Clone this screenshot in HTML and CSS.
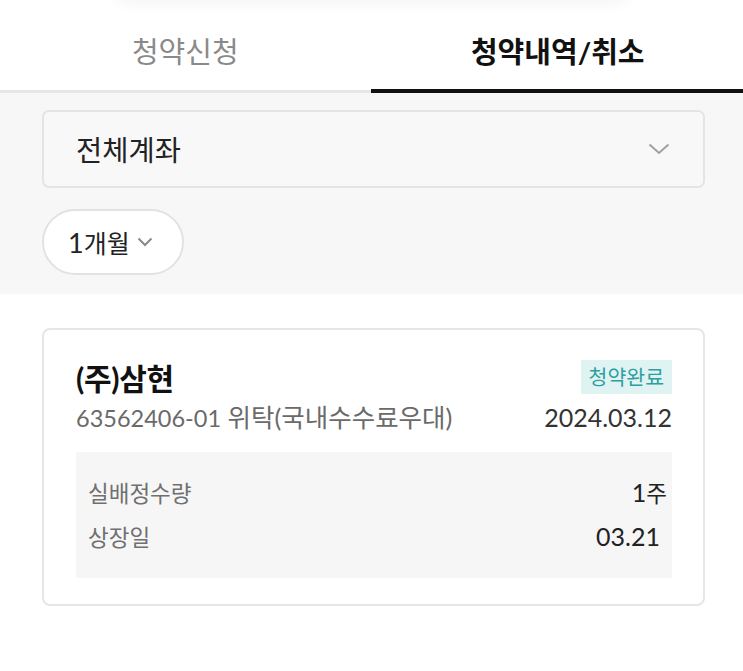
FILE: index.html
```html
<!DOCTYPE html>
<html lang="ko">
<head>
<meta charset="utf-8">
<link rel="stylesheet" href="styles.css">
</head>
<body>
<div class="top-shadow"></div>
<nav class="tabs">
  <div class="tab">청약신청</div>
  <div class="tab active">청약내역/취소</div>
</nav>
<section class="filters">
  <div class="select">
    <span>전체계좌</span>
    <svg class="chev" width="22" height="12" viewBox="0 0 22 12"><path d="M1.5 1.5 L11 10 L20.5 1.5" fill="none" stroke="#a0a0a0" stroke-width="2"/></svg>
  </div>
  <div class="pill">
    <span><span class="num">1</span>개월</span>
    <svg class="chev-sm" width="16" height="10" viewBox="0 0 16 10"><path d="M1.5 1.5 L8 8 L14.5 1.5" fill="none" stroke="#8a8a8a" stroke-width="2"/></svg>
  </div>
</section>
<section class="list">
  <article class="card">
    <div class="row head">
      <h2 class="name">(주)삼현</h2>
      <span class="badge">청약완료</span>
    </div>
    <div class="row sub">
      <span class="acct"><span class="num">63562406-01</span> 위탁(국내수수료우대)</span>
      <span class="date num">2024.03.12</span>
    </div>
    <div class="detail">
      <div class="drow"><span class="lbl">실배정수량</span><span class="val v1"><span class="num">1</span>주</span></div>
      <div class="drow"><span class="lbl">상장일</span><span class="val v2 num">03.21</span></div>
    </div>
  </article>
</section>
</body>
</html>
```
FILE: styles.css
```css
* { box-sizing: border-box; margin: 0; padding: 0; }
html, body { background: #fff; }
body {
  width: 743px;
  font-family: "Lato", "Noto Sans CJK KR", sans-serif;
  color: #222;
  overflow: hidden;
}
.top-shadow {
  height: 40px;
  margin: -40px 110px 0;
  border-radius: 30px;
  background: #fff;
  box-shadow: 0 4px 14px rgba(0,0,0,0.045);
}
.tabs {
  display: flex;
  height: 93px;
}
.tab {
  flex: 1;
  display: flex;
  align-items: center;
  justify-content: center;
  font-size: 29px;
  color: #8a8a8a;
  border-bottom: 3px solid #e6e6e6;
  padding-top: 10px;
}
.tab.active {
  color: #111;
  font-weight: 700;
  border-bottom: 4px solid #111;
  padding-top: 10px;
  padding-left: 2px;
}
.filters {
  background: #f7f7f7;
  padding: 17px 38px 19px 42px;
  height: 201px;
}
.select {
  height: 78px;
  border: 2px solid #e4e4e4;
  border-radius: 7px;
  background: #f8f8f8;
  display: flex;
  align-items: center;
  justify-content: space-between;
  padding: 0 33px 0 32px;
  font-size: 28.5px;
  color: #222;
}
.select span { padding-bottom: 2px; }
.pill {
  margin-top: 21px;
  width: 142px;
  height: 66px;
  border: 2px solid #e2e2e2;
  border-radius: 33px;
  background: #fff;
  display: flex;
  align-items: center;
  padding-left: 24px;
  gap: 7px;
  font-size: 25px;
  color: #222;
}
.pill .num { font-size: 27px; }
.list {
  padding: 34px 38px 0 42px;
}
.card {
  height: 278px;
  border: 2px solid #e6e6e6;
  border-radius: 8px;
  padding: 26px 31px 0 32px;
}
.row {
  display: flex;
  justify-content: space-between;
  align-items: center;
}
.head { height: 42px; }
.name {
  font-size: 30px;
  font-weight: 700;
  color: #111;
  letter-spacing: -0.3px;
}
.badge {
  background: #dff3f3;
  color: #2e9fa0;
  font-size: 20.5px;
  padding: 0 8px 2px;
  height: 34px;
  display: flex;
  align-items: center;
}
.sub {
  height: 38px;
  font-size: 25.5px;
  line-height: 1.2;
}
.sub .acct .num { font-size: 23.5px; }
.sub .date { font-size: 25px; }
.acct { color: #6a6a6a; }
.date { color: #333; }
.detail {
  margin-top: 16px;
  height: 126px;
  background: #f6f6f6;
  padding: 18px 0 0 12px;
}
.drow {
  display: flex;
  justify-content: space-between;
  align-items: center;
  height: 44px;
  font-size: 22.5px;
}
.drow .num { font-size: 25px; }
.lbl { color: #707070; }
.val { color: #222; }
.v1 { margin-right: 5px; }
.v2 { margin-right: 12px; }
```
